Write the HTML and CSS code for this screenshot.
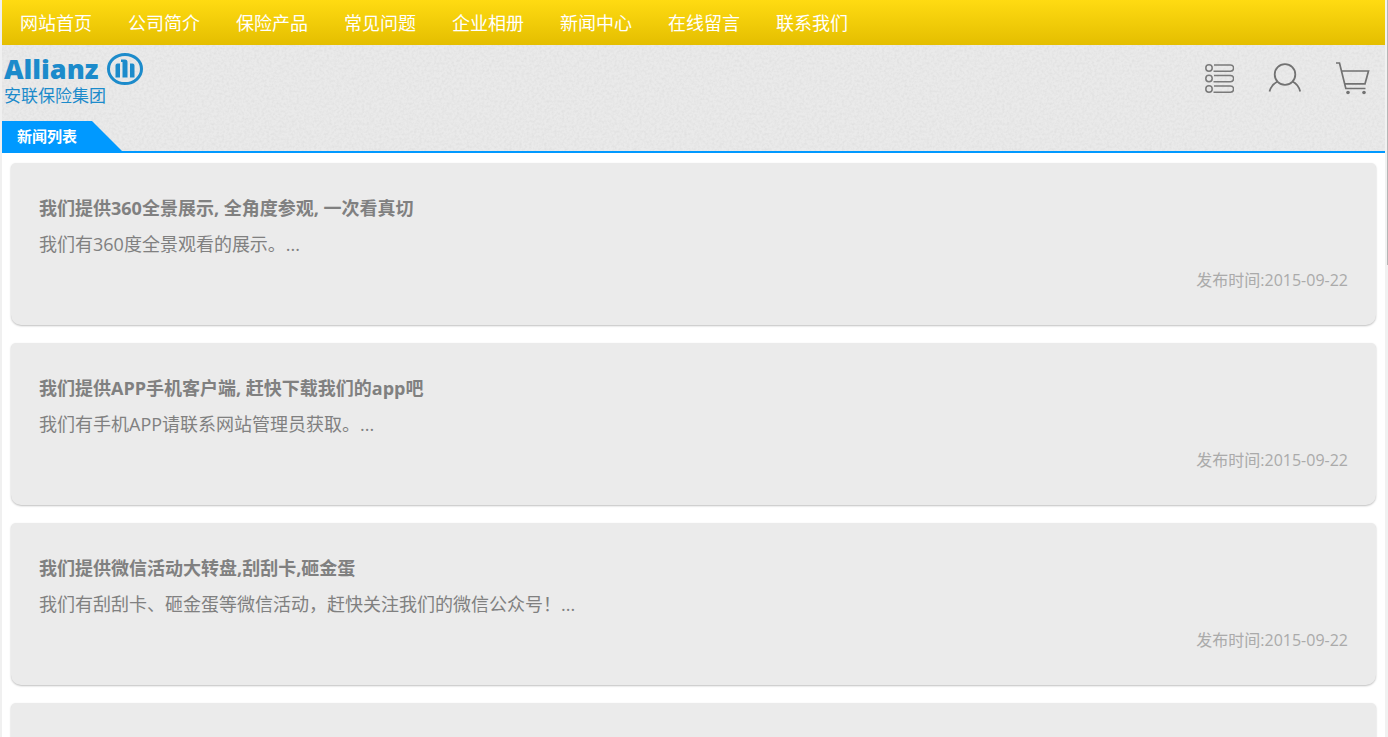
FILE: index.html
```html
<!DOCTYPE html>
<html lang="zh-CN">
<head>
  <meta charset="UTF-8">
  <meta name="viewport" content="width=device-width, initial-scale=1.0">
  <title>新闻列表</title>
  <link rel="stylesheet" href="styles.css">
</head>
<body>
  <div class="page">
    <nav class="topnav">
      <a href="#">网站首页</a>
      <a href="#">公司简介</a>
      <a href="#">保险产品</a>
      <a href="#">常见问题</a>
      <a href="#">企业相册</a>
      <a href="#">新闻中心</a>
      <a href="#">在线留言</a>
      <a href="#">联系我们</a>
    </nav>

    <header class="header">
      <!-- paper grain -->
      <svg class="grain" aria-hidden="true">
        <filter id="grain" x="0" y="0" width="100%" height="100%">
          <feTurbulence type="fractalNoise" baseFrequency="0.4" numOctaves="2" stitchTiles="stitch"/>
          <feColorMatrix type="matrix" values="0 0 0 0 0.3  0 0 0 0 0.3  0 0 0 0 0.3  0.22 0 0 0 -0.08"/>
        </filter>
        <rect width="100%" height="100%" filter="url(#grain)"/>
      </svg>

      <div class="header-row">
        <a href="#" class="logo">
          <span class="logo-top">
            <span class="logo-name">Allianz</span>
            <svg width="36" height="32" viewBox="0 0 36 32" aria-hidden="true">
              <ellipse cx="18" cy="16" rx="16.5" ry="14.5" fill="none" stroke="#1c8bcb" stroke-width="3"/>
              <path d="M10.500 10.500H13V24.500H8.500V12.500q0-2 2-2zM14 6.500H18q2.500 0 2.500 2.500V24.500H15.500V9H14zM23 10.500h2.500q2 0 2 2V24.500H23z" fill="#1c8bcb"/>
            </svg>
          </span>
          <span class="logo-cn">安联保险集团</span>
        </a>

        <div class="tools">
          <a href="#" aria-label="分类">
            <svg width="34" height="34" viewBox="0 0 34 34" fill="none" stroke="#7a7a7a" stroke-width="1.500">
              <circle cx="9" cy="6" r="3.200"/><circle cx="9" cy="16.500" r="3.200"/><circle cx="9" cy="27" r="3.200"/>
              <path d="M14 3h16.500a3.100 3.100 0 0 1 0 6.200H13.500M14 13.500h16.500a3.100 3.100 0 0 1 0 6.200H13.500M14 24h16.500a3.100 3.100 0 0 1 0 6.200H13.500"/>
            </svg>
          </a>
          <a href="#" aria-label="会员">
            <svg width="34" height="34" viewBox="0 0 34 34" fill="none" stroke="#727272" stroke-width="1.800">
              <circle cx="17" cy="12.500" r="10.300"/>
              <path d="M1.500 29.500Q3.500 22.500 9.500 19.500M24.500 19.500Q30.500 22.500 32.200 29.500"/>
            </svg>
          </a>
          <a href="#" aria-label="购物车">
            <svg width="34" height="34" viewBox="0 0 34 34" fill="none" stroke="#727272" stroke-width="1.700">
              <path d="M0 1H3.500L9.800 26.500H29.500M5.300 9H32.500L29 21.800H8.700"/>
              <circle cx="12" cy="30.500" r="1.800" fill="#727272" stroke="none"/><circle cx="28" cy="30.500" r="1.800" fill="#727272" stroke="none"/>
            </svg>
          </a>
        </div>
      </div>

      <h1 class="tab">新闻列表</h1>
    </header>

    <main class="news-list">
      <article class="news">
        <h2>我们提供360全景展示, 全角度参观, 一次看真切</h2>
        <p>我们有360度全景观看的展示。...</p>
        <time datetime="2015-09-22">发布时间:2015-09-22</time>
      </article>
      <article class="news">
        <h2>我们提供APP手机客户端, 赶快下载我们的app吧</h2>
        <p>我们有手机APP请联系网站管理员获取。...</p>
        <time datetime="2015-09-22">发布时间:2015-09-22</time>
      </article>
      <article class="news">
        <h2>我们提供微信活动大转盘,刮刮卡,砸金蛋</h2>
        <p>我们有刮刮卡、砸金蛋等微信活动，赶快关注我们的微信公众号！...</p>
        <time datetime="2015-09-22">发布时间:2015-09-22</time>
      </article>
      <article class="news"></article>
    </main>
  </div>

  <div class="scroll-track"><div class="scroll-thumb"></div></div>
</body>
</html>
```
FILE: styles.css
```css
:root {
  --blue: #0099ff;
  --logo: #1c8bcb;
  --card: #ebebeb;
}

* {
  box-sizing: border-box;
}

body {
  margin: 0;
  display: flex;
  height: 100vh;
  overflow: hidden;
  background: #fff;
  font-family: "Open Sans", "Noto Sans CJK SC", sans-serif;
}

a {
  text-decoration: none;
}

.page {
  flex: 1;
  min-width: 0;
  overflow: hidden;
  border-left: 2px solid #f0f0f0;
}

.topnav {
  display: flex;
  gap: 36px;
  height: 45px;
  padding: 0 18px;
  background: linear-gradient(#ffdb12, #e4be00);
}

.topnav a {
  color: #fff;
  font-size: 18px;
  line-height: 46px;
  white-space: nowrap;
}

.header {
  position: relative;
  background: #eaeaea;
  border-bottom: 2px solid var(--blue);
}

.grain {
  position: absolute;
  top: 0;
  left: 0;
  width: 100%;
  height: 100%;
}

.header-row {
  position: relative;
  display: flex;
  justify-content: space-between;
  height: 76px;
  padding: 8px 15px 0 2px;
}

.logo {
  display: flex;
  flex-direction: column;
  color: var(--logo);
}

.logo-top {
  display: flex;
  align-items: center;
  gap: 9px;
  height: 32px;
}

.logo-name {
  font-family: "Open Sans", sans-serif;
  font-size: 27px;
  font-weight: 800;
  line-height: 30px;
}

.logo-cn {
  font-size: 17px;
  line-height: 22px;
}

.tools {
  display: flex;
  gap: 34px;
  padding-top: 9px;
}

.tools svg {
  display: block;
}

.tab {
  position: relative;
  width: 120px;
  height: 30px;
  margin: 0;
  padding-left: 15px;
  background: var(--blue);
  clip-path: polygon(0 0, 90px 0, 100% 100%, 0 100%);
  color: #fff;
  font-size: 15px;
  line-height: 30px;
}

.news-list {
  display: flex;
  flex-direction: column;
  gap: 18px;
  padding: 10px 9px;
}

.news {
  display: flex;
  flex-direction: column;
  min-height: 162px;
  padding: 27px 28px;
  background: var(--card);
  border-radius: 5px 5px 10px 10px;
  box-shadow: 0 1px 2px rgba(0, 0, 0, 0.25);
  color: #808080;
  font-size: 18px;
  line-height: 36px;
}

.news h2,
.news p {
  margin: 0;
  font-size: 18px;
}

.news time {
  align-self: flex-end;
  color: #aaa;
  font-size: 16px;
}

.scroll-track {
  width: 3px;
  padding-left: 2px;
  background: #f1f1f1;
}

.scroll-thumb {
  height: 36%;
  background: #b5b5b5;
}
```
